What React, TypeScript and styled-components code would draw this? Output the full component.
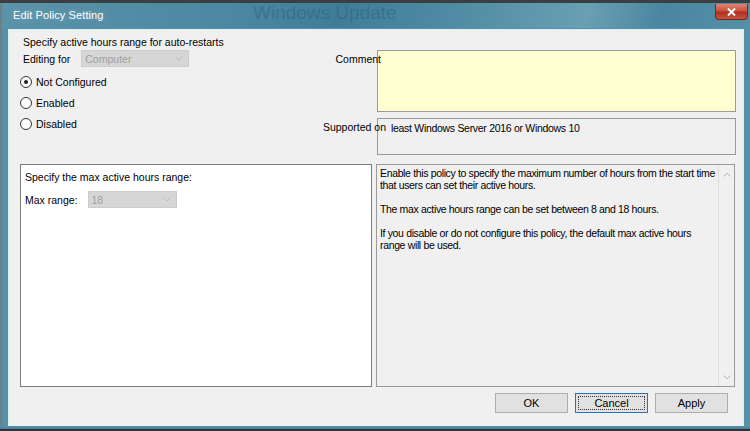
import React from "react";
import styled, { createGlobalStyle } from "styled-components";

const GlobalStyle = createGlobalStyle`
  html, body {
    margin: 0;
    padding: 0;
  }
  body {
    width: 750px;
    height: 431px;
    overflow: hidden;
    background: #2f3a3f;
    font-family: "Liberation Sans", Arial, sans-serif;
    color: #000;
  }
`;

const Window = styled.div`
  width: 750px;
  height: 431px;
  display: flex;
  flex-direction: column;
  background: #5790a7;
  border-left: 2px solid #6f7f86;
  box-sizing: border-box;
`;

const TopStrip = styled.div`
  height: 3px;
  background: #3b3f42;
  margin-left: -2px;
`;

const TitleBar = styled.div`
  position: relative;
  height: 25px;
  display: flex;
  align-items: center;
  padding-left: 11px;
  background: linear-gradient(
    100deg,
    #5a93aa 0%,
    #4c88a1 30%,
    #3f7d97 45%,
    #4f8ba3 60%,
    #6a9fb4 78%,
    #4a86a0 88%,
    #5690a7 100%
  );
  overflow: hidden;
`;

const Title = styled.span`
  position: relative;
  z-index: 1;
  color: #fff;
  font-size: 11px;
  letter-spacing: 0.1px;
  margin-top: -1px;
  text-shadow: 0 0 6px rgba(255, 255, 255, 0.25);
`;

const GhostText = styled.span`
  position: absolute;
  left: 251px;
  top: 0;
  font-size: 19px;
  line-height: 19px;
  color: rgba(40, 90, 115, 0.42);
  white-space: nowrap;
`;

const CloseButton = styled.div`
  position: absolute;
  right: 2px;
  top: 1px;
  width: 33px;
  height: 16px;
  border-radius: 0 0 4px 4px;
  border: 1px solid #6b2a22;
  border-top: none;
  box-sizing: border-box;
  background: linear-gradient(180deg, #e0867a 0%, #c9503f 45%, #b13020 55%, #c9543c 100%);
  display: flex;
  align-items: center;
  justify-content: center;
`;

const Client = styled.div`
  flex: 1;
  margin: 1px 6px 0 6px;
  background: #f0f0f0;
  border: 1px solid #d9eef2;
  border-bottom: 1px solid #e4f2f4;
  padding: 6px 7px 0 11px;
  display: flex;
  flex-direction: column;
  font-size: 10.5px;
`;

const BottomFrame = styled.div`
  height: 5px;
  background: linear-gradient(180deg, #5a93aa 0%, #3f7d97 60%, #2c3538 61%, #2c3538 100%);
  margin-left: -2px;
`;

const TopSection = styled.div`
  display: flex;
  height: 119px;
`;

const LeftPane = styled.div`
  flex: 1;
  display: flex;
  flex-direction: column;
`;

const Headline = styled.div`
  padding-left: 3px;
  height: 13px;
  line-height: 13px;
`;

const EditingRow = styled.div`
  display: flex;
  align-items: center;
  gap: 11px;
  padding-left: 3px;
  margin-top: 1px;
  height: 17px;
`;

const Combo = styled.div<{ $width: number }>`
  width: ${(p) => p.$width}px;
  height: 17px;
  box-sizing: border-box;
  background: #d6d6d6;
  border: 1px solid #cccccc;
  color: #9f9f9f;
  display: flex;
  align-items: center;
  justify-content: space-between;
  padding: 0 5px 0 3px;
`;

const RadioList = styled.div`
  display: flex;
  flex-direction: column;
  margin-top: 8px;
  gap: 7px;
`;

const RadioRow = styled.label`
  display: flex;
  align-items: center;
  gap: 4px;
  height: 14px;
`;

const RadioDot = styled.span<{ $checked?: boolean }>`
  width: 10px;
  height: 10px;
  border-radius: 50%;
  border: 1px solid #333;
  background: #fff;
  display: flex;
  align-items: center;
  justify-content: center;
  &::after {
    content: "";
    width: 4px;
    height: 4px;
    border-radius: 50%;
    background: ${(p) => (p.$checked ? "#222" : "transparent")};
  }
`;

const RightPane = styled.div`
  display: grid;
  grid-template-columns: auto 359px;
  grid-template-rows: 62px 37px;
  row-gap: 6px;
  margin-top: 14px;
`;

const FieldLabel = styled.div<{ $overlap: number }>`
  text-align: right;
  padding: 3px 0 0 0;
  margin-right: -${(p) => p.$overlap}px;
  position: relative;
  z-index: 1;
`;

const FieldBox = styled.div<{ $bg: string }>`
  background: ${(p) => p.$bg};
  border: 1px solid #9a9a9a;
  padding: 3px 0 0 13px;
  letter-spacing: -0.3px;
`;

const LowerSection = styled.div`
  display: grid;
  grid-template-columns: 352px 359px;
  column-gap: 4px;
  height: 223px;
  margin-top: 9px;
`;

const OptionsPanel = styled.div`
  background: #fff;
  border: 1px solid #7d7d7d;
  padding: 6px 4px;
  display: flex;
  flex-direction: column;
  gap: 8px;
`;

const OptionRow = styled.div`
  display: flex;
  align-items: center;
  gap: 10px;
`;

const HelpPanel = styled.div`
  border: 1px solid #9a9a9a;
  background: #f0f0f0;
  display: flex;
  min-width: 0;
`;

const HelpText = styled.div`
  flex: 1;
  min-width: 0;
  overflow: hidden;
  padding: 2px 3px;
  line-height: 12px;
  letter-spacing: -0.35px;
`;

const HelpPara = styled.p`
  margin: 0 0 12px 0;
`;

const Line = styled.span`
  display: block;
  white-space: nowrap;
`;

const ScrollTrack = styled.div`
  width: 15px;
  flex-shrink: 0;
  border-left: 1px solid #dedede;
  display: flex;
  flex-direction: column;
  justify-content: space-between;
  align-items: center;
  padding: 7px 0 6px;
`;

const ButtonRow = styled.div`
  display: flex;
  justify-content: flex-end;
  gap: 7px;
  margin-top: 6px;
  padding-right: 8px;
`;

const Button = styled.div<{ $focused?: boolean }>`
  width: 73px;
  height: 20px;
  box-sizing: border-box;
  background: #e1e1e1;
  border: 1px solid ${(p) => (p.$focused ? "#2a6fc0" : "#adadad")};
  display: flex;
  align-items: center;
  justify-content: center;
  font-size: 11px;
  position: relative;
  &::after {
    content: "";
    position: absolute;
    inset: 2px;
    border: 1px dotted ${(p) => (p.$focused ? "#333" : "transparent")};
  }
`;

const Chevron = ({ up, color = "#b5b5b5" }: { up?: boolean; color?: string }) => (
  <svg width="8" height="5" viewBox="0 0 8 5">
    <path
      d={up ? "M0.5 4.5 L4 1 L7.5 4.5" : "M0.5 0.5 L4 4 L7.5 0.5"}
      fill="none"
      stroke={color}
      strokeWidth="1"
    />
  </svg>
);

const helpParagraphs = [
  [
    "Enable this policy to specify the maximum number of hours from the start time",
    "that users can set their active hours.",
  ],
  ["The max active hours range can be set between 8 and 18 hours."],
  [
    "If you disable or do not configure this policy, the default max active hours",
    "range will be used.",
  ],
];

const radios = [
  { label: "Not Configured", checked: true },
  { label: "Enabled", checked: false },
  { label: "Disabled", checked: false },
];

export default function App() {
  return (
    <>
      <GlobalStyle />
      <Window>
        <TopStrip />
        <TitleBar>
          <GhostText>Windows Update</GhostText>
          <Title>Edit Policy Setting</Title>
          <CloseButton>
            <svg width="9" height="8" viewBox="0 0 9 8">
              <path d="M1 0.5 L8 7.5 M8 0.5 L1 7.5" stroke="#fff" strokeWidth="2" />
            </svg>
          </CloseButton>
        </TitleBar>
        <Client>
          <TopSection>
            <LeftPane>
              <Headline>Specify active hours range for auto-restarts</Headline>
              <EditingRow>
                <span>Editing for</span>
                <Combo $width={108}>
                  <span>Computer</span>
                  <Chevron color="#bdbdbd" />
                </Combo>
              </EditingRow>
              <RadioList>
                {radios.map((r) => (
                  <RadioRow key={r.label}>
                    <RadioDot $checked={r.checked} />
                    <span>{r.label}</span>
                  </RadioRow>
                ))}
              </RadioList>
            </LeftPane>
            <RightPane>
              <FieldLabel $overlap={4}>Comment</FieldLabel>
              <FieldBox $bg="#ffffd2" />
              <FieldLabel $overlap={9}>Supported on</FieldLabel>
              <FieldBox $bg="#f0f0f0">least Windows Server 2016 or Windows 10</FieldBox>
            </RightPane>
          </TopSection>
          <LowerSection>
            <OptionsPanel>
              <div>Specify the max active hours range:</div>
              <OptionRow>
                <span>Max range:</span>
                <Combo $width={89}>
                  <span>18</span>
                  <Chevron color="#bdbdbd" />
                </Combo>
              </OptionRow>
            </OptionsPanel>
            <HelpPanel>
              <HelpText>
                {helpParagraphs.map((para, i) => (
                  <HelpPara key={i}>
                    {para.map((line) => (
                      <Line key={line}>{line}</Line>
                    ))}
                  </HelpPara>
                ))}
              </HelpText>
              <ScrollTrack>
                <Chevron up />
                <Chevron />
              </ScrollTrack>
            </HelpPanel>
          </LowerSection>
          <ButtonRow>
            <Button>OK</Button>
            <Button $focused>Cancel</Button>
            <Button>Apply</Button>
          </ButtonRow>
        </Client>
        <BottomFrame />
      </Window>
    </>
  );
}
